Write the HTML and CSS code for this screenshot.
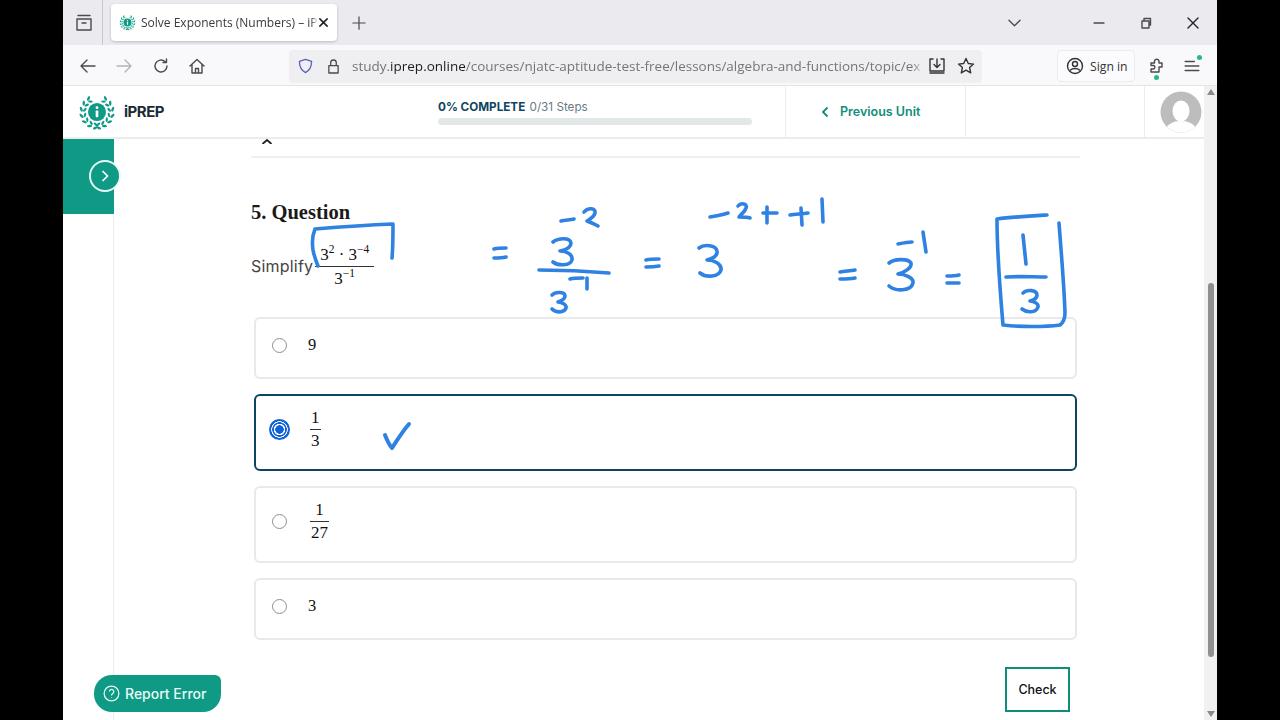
FILE: index.html
```html
<!DOCTYPE html>
<html>
  <head>
    <meta name="viewport" content="width=device-width, initial-scale=1" />
    <title>Solve Exponents (Numbers) – iPREP</title>
    <link rel="stylesheet" href="styles.css">
  </head>
  <body>
    <svg class="defs" width="0" height="0">
      <defs>
        <g id="leaf_pair">
          <ellipse cx="20" cy="3.200" rx="1.300" ry="2.700" transform="rotate(58 20 3.200)" />
          <ellipse cx="20" cy="7" rx="1.200" ry="2.500" transform="rotate(-58 20 7)" />
        </g>
        <g id="wreath_side">
          <use href="#leaf_pair" transform="rotate(-32 20 20)" />
          <use href="#leaf_pair" transform="rotate(-56 20 20)" />
          <use href="#leaf_pair" transform="rotate(-80 20 20)" />
          <use href="#leaf_pair" transform="rotate(-104 20 20)" />
          <use href="#leaf_pair" transform="rotate(-128 20 20)" />
          <use href="#leaf_pair" transform="rotate(-152 20 20)" />
          <use href="#leaf_pair" transform="rotate(-174 20 20)" />
        </g>
      </defs>
      <symbol id="logo" viewBox="0 0 40 40">
        <g fill="#0f9a85">
          <use href="#wreath_side" />
          <use href="#wreath_side" transform="translate(40 0) scale(-1 1)" />
        </g>
        <circle cx="20" cy="20" r="9.500" fill="#0f9a85" />
        <circle cx="20" cy="15.500" r="1.500" fill="#fff" />
        <rect x="18.600" y="18.300" width="2.800" height="7.200" rx="0.800" fill="#fff" />
      </symbol>
    </svg>

    <div class="window">
      <div class="tabstrip">
        <svg class="ico tabs_ico" viewBox="0 0 18 18"><path d="M3 1.500h12M2 5h14v11H2zM7 9h4" /></svg>
        <div class="tab_sep"></div>
        <div class="tab">
          <svg class="favicon"><use href="#logo" /></svg>
          <span class="tab_title">Solve Exponents (Numbers) – iP</span>
          <svg class="ico tab_close" viewBox="0 0 12 12"><path d="M2 2l8 8M10 2l-8 8" /></svg>
        </div>
        <svg class="ico new_tab" viewBox="0 0 16 16"><path d="M8 1v14M1 8h14" /></svg>
        <svg class="ico tabs_more" viewBox="0 0 14 8"><path d="M1 1l6 6 6-6" /></svg>
        <svg class="ico win_btn win_min" viewBox="0 0 12 12"><path d="M1 6h10" /></svg>
        <svg class="ico win_btn win_max" viewBox="0 0 12 12"><path d="M2 4h7v7H2zM4 4V1.500h6.500V8H9" /></svg>
        <svg class="ico win_btn win_close" viewBox="0 0 12 12"><path d="M1 1l10 10M11 1L1 11" /></svg>
      </div>

      <div class="toolbar">
        <svg class="ico nav_btn nav_back" viewBox="0 0 16 16"><path d="M15 8H1M7 2L1 8l6 6" /></svg>
        <svg class="ico nav_btn nav_fwd" viewBox="0 0 16 16"><path d="M1 8h14M9 2l6 6-6 6" /></svg>
        <svg class="ico nav_btn" viewBox="0 0 16 16"><path d="M14 8a6 6 0 1 1-2-4.500M13.500 1v3.500H10" /></svg>
        <svg class="ico nav_btn" viewBox="0 0 16 16"><path d="M1 8l7-6.500L15 8M3 6.500V15h10V6.500M6.500 15v-4.500h3V15" /></svg>
        <div class="urlbar">
          <svg class="ico shield" viewBox="0 0 16 16"><path d="M8 1l6.500 2c0 6-1.500 9.500-6.500 12C3 12.500 1.500 9 1.500 3z" /></svg>
          <svg class="ico lock" viewBox="0 0 14 16"><path d="M2 7h10v8H2zM4 7V4a3 3 0 0 1 6 0v3" /></svg>
          <div class="url"><span>study.</span><b>iprep.online</b><span>/courses/njatc-aptitude-test-free/lessons/algebra-and-functions/topic/ex</span></div>
          <svg class="ico save" viewBox="0 0 18 18"><path d="M5 2H2v12h14V2h-3M9 2v8M6 7.500l3 3 3-3M2 16h14" /></svg>
          <svg class="ico star" viewBox="0 0 18 18"><path d="M9 1.500l2.300 5 5.200.6-3.900 3.500 1.100 5.300L9 13.200l-4.700 2.700 1.100-5.300L1.500 7.100l5.200-.6z" /></svg>
        </div>
        <div class="signin">
          <svg class="ico" viewBox="0 0 18 18"><circle cx="9" cy="9" r="7.500" /><circle cx="9" cy="7" r="2.500" /><path d="M4.500 13c2-2 7-2 9 0" /></svg>
          <span>Sign in</span>
        </div>
        <div class="ext_btn">
          <svg class="ico" viewBox="0 0 18 18"><path d="M3 6h3.500V4a2.300 2.300 0 0 1 4.500 0v2h3v4h-3v5H3v-3h2.500a1.800 1.800 0 0 0 0-3.500H3z" /></svg>
          <i class="dot dot_ext"></i>
        </div>
        <div class="menu_btn">
          <svg class="ico" viewBox="0 0 16 14"><path d="M2 3h8M2 7h12M2 11h12" /></svg>
          <i class="dot dot_menu"></i>
        </div>
      </div>

      <div class="page">
        <div class="page_main">
          <div class="topbar">
            <div class="brand">
              <svg class="logo"><use href="#logo" /></svg>
              <span>iPREP</span>
            </div>
            <div class="progress">
              <p><b>0% COMPLETE</b> 0/31 Steps</p>
              <div class="progress_bar"></div>
            </div>
            <div class="prev_unit">
              <svg class="prev_ico" viewBox="0 0 8 12"><path d="M6.500 1.500L2 6l4.500 4.500" /></svg>
              <span>Previous Unit</span>
            </div>
            <div class="top_blank"></div>
            <div class="top_user">
              <svg class="avatar" viewBox="0 0 42 42">
                <defs><clipPath id="av"><circle cx="21" cy="21" r="20.500" /></clipPath></defs>
                <circle cx="21" cy="21" r="20.500" fill="#bdbdbd" />
                <g clip-path="url(#av)" fill="#fff">
                  <ellipse cx="21" cy="20" rx="8.500" ry="10.500" />
                  <path d="M4 42c2-9 9-12 17-12s15 3 17 12z" />
                </g>
              </svg>
            </div>
          </div>

          <div class="body_row">
            <div class="sidebar">
              <div class="side_toggle">
                <div class="side_circle">
                  <svg viewBox="0 0 10 14"><path d="M2.500 2l5 5-5 5" /></svg>
                </div>
              </div>
            </div>

            <div class="content">
              <div class="cut_row">
                <svg class="cut_x" viewBox="0 0 12 5"><path d="M1.500 5L6 1 10.500 5" /></svg>
              </div>

              <h2 class="q_title">5. Question</h2>
              <div class="q_text">
                <span>Simplify</span>
                <span class="frac frac_big">
                  <span class="num">3<sup>2</sup> · 3<sup>−4</sup></span>
                  <span class="den">3<sup>−1</sup></span>
                </span>
              </div>

              <div class="options">
                <div class="option">
                  <span class="radio"></span>
                  <span class="opt_val">9</span>
                </div>
                <div class="option option_tall option_on">
                  <span class="radio radio_on"></span>
                  <span class="frac"><span class="num">1</span><span class="den">3</span></span>
                </div>
                <div class="option option_tall">
                  <span class="radio"></span>
                  <span class="frac"><span class="num">1</span><span class="den">27</span></span>
                </div>
                <div class="option">
                  <span class="radio"></span>
                  <span class="opt_val">3</span>
                </div>
              </div>

              <div class="actions">
                <button class="check_btn">Check</button>
              </div>
            </div>
          </div>

          <button class="report_btn">
            <svg viewBox="0 0 18 18"><circle cx="9" cy="9" r="7.800" /><path d="M6.800 7a2.300 2.300 0 1 1 3.500 2c-.9.600-1.300 1-1.300 2M9 13v.6" /></svg>
            Report Error
          </button>
        </div>

        <div class="scrollbar">
          <i class="arrow_up"></i>
          <div class="thumb"></div>
          <i class="arrow_down"></i>
        </div>
      </div>
    </div>

    <!-- pen annotations written over the recording -->
    <svg class="ink" viewBox="0 0 1280 720">
      <path d="M393 224C370 225 340 227 315 229C312 236 312 243 313 250C314 256 316 261 318 266M393 224C393 236 393 248 392 258" />
      <path d="M494 249C498 248 502 248 506 248M494 258C498 258 502 258 506 257" />
      <path d="M561 221C565 220 570 220 574 219M584 212C588 207 596 208 595 213C594 217 590 219 587 221C590 222 594 224 598 226" />
      <path d="M553 242C558 238 570 237 571 243C571 248 565 250 560 251C566 251 573 254 572 260C570 266 558 266 553 262" />
      <path d="M539 270C562 270 586 271 609 273" />
      <path d="M552 295C556 291 565 292 565 296C565 299 561 301 558 302C562 302 567 305 566 308C564 313 556 313 552 309" />
      <path d="M570 279C574 278 578 278 583 278M587 278L587 289" />
      <path d="M646 260C650 259 654 259 659 259M646 267C650 267 654 267 659 266" />
      <path d="M710 217C716 216 722 215 728 213M738 206C741 202 748 204 746 208C745 212 741 214 739 217C743 217 747 217 750 218" />
      <path d="M767 207L767 223M763 213C768 213 772 213 777 213" />
      <path d="M790 215C796 214 802 214 808 213M801 208L802 225" />
      <path d="M822 199L823 222" />
      <path d="M699 248C704 244 716 245 717 251C718 256 712 259 707 260C714 260 722 264 721 270C719 277 706 278 700 273" />
      <path d="M840 272C845 271 850 271 855 270M840 279C845 279 850 279 855 278" />
      <path d="M898 244C903 243 908 242 912 242M923 232L926 252" />
      <path d="M889 263C894 259 908 258 911 263C912 268 905 272 898 274C905 274 914 278 913 283C911 291 896 292 889 286" />
      <path d="M947 276C951 276 955 276 959 275M947 283C951 283 955 283 959 283" />
      <path d="M1047 215C1030 216 1012 217 997 219C997 250 1000 290 1003 325C1020 327 1045 327 1060 325C1064 322 1065 318 1065 313C1064 283 1061 250 1059 223" />
      <path d="M1023 235L1026 264" />
      <path d="M1006 277C1020 276 1034 277 1046 277" />
      <path d="M1023 293C1027 289 1037 290 1037 295C1037 298 1034 300 1030 301C1034 301 1039 304 1038 307C1036 313 1027 313 1022 309" />
      <path class="ink_tick" d="M385 435C387 440 389 445 392 448C396 442 402 432 409 424" />
    </svg>
  </body>
</html>
```

FILE: styles.css
```css
* {
  box-sizing: border-box;
}

html,
body {
  margin: 0;
  height: 100%;
  overflow: hidden;
}

body {
  background-color: #000;
  font-family: "Open Sans", "Noto Sans", sans-serif;
  color: #222;
}

.defs {
  position: absolute;
}

.window {
  display: flex;
  flex-direction: column;
  width: 1154px;
  height: 720px;
  margin-left: 63px;
  background-color: #fff;
}

.ico {
  fill: none;
  stroke: #4a4a4f;
  stroke-width: 1.4;
  stroke-linecap: round;
  stroke-linejoin: round;
  flex: none;
}

/* browser tabs */
.tabstrip {
  display: flex;
  align-items: center;
  height: 45px;
  background-color: #ebebef;
}

.tabs_ico {
  width: 18px;
  height: 18px;
  margin-left: 12px;
}

.tab_sep {
  width: 1px;
  height: 45px;
  margin: 0 8px 0 9px;
  background-color: #c8c8cc;
}

.tab {
  display: flex;
  align-items: center;
  width: 226px;
  height: 37px;
  margin-top: -1px;
  padding: 0 11px 0 8px;
  background-color: #fff;
  border-radius: 4px;
  box-shadow: 0 1px 3px rgba(0, 0, 0, 0.2);
}

.favicon {
  flex: none;
  width: 17px;
  height: 17px;
  margin-right: 5px;
}

.tab_title {
  white-space: nowrap;
  font-size: 12px;
  color: #3a3a3f;
  -webkit-mask-image: linear-gradient(to right, #000 90%, #bbb 96%, transparent 100%);
  mask-image: linear-gradient(to right, #000 90%, #bbb 96%, transparent 100%);
}

.tab_close {
  width: 11px;
  height: 11px;
  margin-left: auto;
  margin-right: 6px;
  stroke: #222;
  stroke-width: 1.7;
}

.new_tab {
  width: 14px;
  height: 14px;
  margin-left: 15px;
}

.tabs_more {
  width: 13px;
  height: 8px;
  margin-left: 642px;
}

.win_btn {
  width: 12px;
  height: 12px;
}

.win_min {
  margin-left: 72px;
}

.win_max {
  margin-left: 35px;
}

.win_close {
  margin-left: 35px;
  stroke: #222;
}

/* browser toolbar */
.toolbar {
  display: flex;
  align-items: center;
  height: 41px;
  padding-top: 2px;
  background-color: #f9f9fb;
  border-bottom: 1px solid #e4e4e6;
}

.nav_btn {
  width: 16px;
  height: 16px;
  margin-left: 20px;
}

.nav_back {
  margin-left: 17px;
}

.nav_fwd {
  stroke: #b4b4b8;
}

.nav_fwd + .nav_btn {
  margin-left: 21px;
}

.urlbar {
  display: flex;
  align-items: center;
  width: 693px;
  height: 33px;
  margin-left: 84px;
  padding: 0 7px 0 9px;
  background-color: #efeff2;
  border-radius: 4px;
}

.shield {
  width: 15px;
  height: 16px;
  stroke: #5a5fc0;
}

.lock {
  width: 13px;
  height: 15px;
  margin-left: 14px;
}

.url {
  flex: 1;
  margin-left: 12px;
  white-space: nowrap;
  font-size: 13.500px;
  color: #74747a;
  -webkit-mask-image: linear-gradient(to right, #000 96%, #aaa 98%, transparent 100%);
  mask-image: linear-gradient(to right, #000 96%, #aaa 98%, transparent 100%);
}

.url b {
  font-weight: 400;
  color: #1c1c1f;
}

.save {
  width: 18px;
  height: 18px;
  margin-left: 4px;
  stroke: #333;
}

.star {
  width: 18px;
  height: 18px;
  margin-left: 11px;
  stroke: #333;
}

.signin {
  display: flex;
  align-items: center;
  width: 78px;
  height: 32px;
  margin-left: 75px;
  padding-left: 8px;
  gap: 6px;
  font-size: 12.200px;
  color: #333;
  background-color: #fbfbfd;
  border: 1px solid #ececee;
  border-radius: 4px;
}

.signin .ico {
  width: 18px;
  height: 18px;
  stroke: #333;
}

.ext_btn,
.menu_btn {
  position: relative;
  display: flex;
  width: 18px;
  height: 18px;
}

.ext_btn {
  margin-left: 13px;
}

.menu_btn {
  margin-left: 17px;
}

.ext_btn .ico,
.menu_btn .ico {
  width: 18px;
  height: 18px;
}

.dot {
  position: absolute;
  width: 5px;
  height: 5px;
  background-color: #2bb58f;
  border-radius: 50%;
}

.dot_ext {
  left: 6px;
  bottom: -5px;
}

.dot_menu {
  right: -1px;
  top: -2px;
}

/* page */
.page {
  position: relative;
  display: flex;
  flex: 1;
  min-height: 0;
}

.page_main {
  flex: 1;
  min-width: 0;
}

.topbar {
  display: flex;
  align-items: stretch;
  height: 53px;
  background-color: #fff;
  border-bottom: 2px solid #ececec;
}

.brand {
  display: flex;
  align-items: center;
  width: 375px;
  padding-left: 15px;
  font-family: "Inter", "Liberation Sans", sans-serif;
  font-size: 15px;
  font-weight: 700;
  letter-spacing: -0.5px;
  color: #1c2b33;
}

.logo {
  width: 38px;
  height: 38px;
  margin-right: 8px;
}

.progress {
  width: 347px;
  padding-top: 12px;
}

.progress p {
  margin: 0 0 2px;
  font-family: "Inter", "Liberation Sans", sans-serif;
  font-size: 11.700px;
  line-height: 18px;
  color: #6a7a85;
}

.progress b {
  margin-right: 1px;
  font-weight: 700;
  color: #0d4560;
}

.progress_bar {
  width: 314px;
  height: 7px;
  background-color: #e2e7e8;
  border-radius: 4px;
}

.prev_unit {
  display: flex;
  align-items: center;
  width: 180px;
  padding-left: 35px;
  gap: 11px;
  font-family: "Inter", "Liberation Sans", sans-serif;
  font-size: 12.500px;
  font-weight: 600;
  color: #0f8d7a;
  border-left: 1px solid #ececec;
}

.prev_ico {
  width: 8px;
  height: 12px;
  fill: none;
  stroke: #0f8d7a;
  stroke-width: 1.800;
}

.top_blank {
  width: 179px;
  border-left: 1px solid #ececec;
}

.top_user {
  display: flex;
  align-items: center;
  flex: 1;
  padding-left: 15px;
  border-left: 1px solid #ececec;
}

.avatar {
  width: 42px;
  height: 42px;
}

.body_row {
  display: flex;
  height: 581px;
}

.sidebar {
  flex: none;
  width: 51px;
  border-right: 1px solid #ececec;
}

.side_toggle {
  position: relative;
  height: 75px;
  margin-right: -1px;
  background-color: #0f9a85;
}

.side_circle {
  position: absolute;
  top: 21px;
  right: -7px;
  display: flex;
  align-items: center;
  justify-content: center;
  width: 32px;
  height: 32px;
  background-color: #0f9a85;
  border: 2px solid #e9f7f4;
  border-radius: 50%;
}

.side_circle svg {
  width: 10px;
  height: 14px;
  fill: none;
  stroke: #fff;
  stroke-width: 1.700;
}

.content {
  width: 829px;
  margin-left: 137px;
}

.cut_row {
  height: 19px;
  padding-left: 10px;
  border-bottom: 2px solid #f0f0f0;
}

.cut_x {
  display: block;
  width: 12px;
  height: 5px;
  fill: none;
  stroke: #222;
  stroke-width: 1.800;
}

.q_title {
  margin: 42px 0 19px;
  font-family: "Liberation Serif", serif;
  font-size: 20.500px;
  font-weight: 700;
  line-height: 24px;
  color: #1a1a1a;
}

.q_text {
  display: flex;
  align-items: center;
  height: 46px;
  font-family: "Inter", "Liberation Sans", sans-serif;
  font-size: 16px;
  letter-spacing: 0.200px;
  color: #444;
}

.frac {
  display: inline-flex;
  flex-direction: column;
  align-items: center;
  font-family: "Liberation Serif", serif;
  font-size: 17px;
  line-height: 20px;
  letter-spacing: 0;
  color: #111;
}

.frac sup {
  font-size: 11.500px;
  line-height: 0;
}

.frac .num {
  align-self: stretch;
  padding: 0 1px 1px;
  text-align: center;
  border-bottom: 1px solid #333;
}

.frac .den {
  padding: 1px 1px 0;
}

.frac_big {
  width: 59px;
  margin-left: 2px;
  white-space: nowrap;
}

.frac_big .num {
  padding: 1px 0;
}

.frac_big .den {
  padding-top: 2px;
}

.options {
  display: flex;
  flex-direction: column;
  gap: 15px;
  margin: 28px 3px 0;
}

.option {
  display: flex;
  align-items: center;
  height: 62px;
  padding: 0 0 6px 16px;
  background-color: #fff;
  border: 2px solid #e9e9e9;
  border-radius: 6px;
}

.option_tall {
  height: 77px;
}

.option_on {
  border-color: #0b4562;
}

.radio {
  flex: none;
  width: 15px;
  height: 15px;
  margin-right: 21px;
  background-color: #fff;
  border: 1px solid #8f8f8f;
  border-radius: 50%;
}

.radio_on {
  width: 21px;
  height: 21px;
  margin: 0 18px 0 -3px;
  background: radial-gradient(circle, #0f62d8 0 4px, #fff 4.500px 5.500px, #0f62d8 6px 7px, #fff 7.500px 8px, #0f62d8 8.500px);
  border: 0;
}

.opt_val {
  font-family: "Liberation Serif", serif;
  font-size: 16.500px;
  color: #111;
}

.option .frac {
  margin-left: 2px;
}

.actions {
  display: flex;
  justify-content: flex-end;
  margin: 27px 10px 0 0;
}

.check_btn {
  width: 65px;
  height: 45px;
  padding: 0;
  font-family: "Inter", "Liberation Sans", sans-serif;
  font-size: 12.500px;
  font-weight: 500;
  color: #111;
  background-color: #fff;
  border: 2px solid #0f8d7a;
}

.report_btn {
  position: absolute;
  left: 31px;
  top: 589px;
  display: flex;
  align-items: center;
  gap: 5px;
  width: 127px;
  height: 37px;
  padding: 0 0 0 9px;
  font-family: "Inter", "Liberation Sans", sans-serif;
  font-size: 14px;
  font-weight: 500;
  color: #e8fbf7;
  background-color: #0f9a85;
  border: 0;
  border-radius: 18px 6px 18px 18px;
}

.report_btn svg {
  width: 17px;
  height: 17px;
  fill: none;
  stroke: #e8fbf7;
  stroke-width: 1.300;
}

/* scrollbar */
.scrollbar {
  display: flex;
  flex: none;
  flex-direction: column;
  align-items: center;
  width: 13px;
  background-color: #f1f1f1;
}

.arrow_up,
.arrow_down {
  width: 0;
  height: 0;
  border-left: 4px solid transparent;
  border-right: 4px solid transparent;
}

.arrow_up {
  margin-top: 3px;
  border-bottom: 6px solid #8a8a8a;
}

.thumb {
  width: 6px;
  height: 374px;
  margin: 188px 0 auto;
  background-color: #8f8f8f;
  border-radius: 3px;
}

.arrow_down {
  margin-bottom: 3px;
  border-top: 6px solid #8a8a8a;
}

/* pen overlay */
.ink {
  position: absolute;
  top: 0;
  left: 0;
  width: 1280px;
  height: 720px;
  fill: none;
  stroke: #2f82e2;
  stroke-width: 3.600;
  stroke-linecap: round;
  stroke-linejoin: round;
  pointer-events: none;
}

.ink_tick {
  stroke-width: 4;
}
```
